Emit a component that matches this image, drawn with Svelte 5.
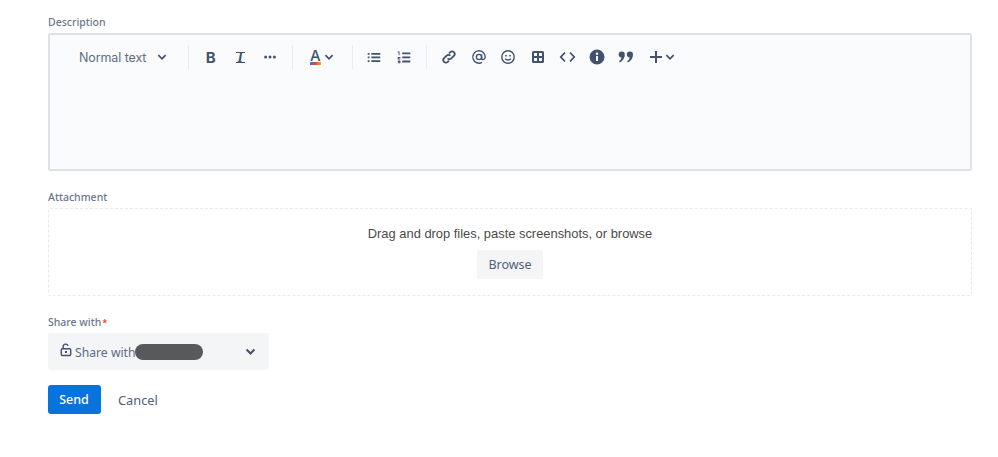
<script>
  const lists = [
    { id: 'bullet', d: 'M3 5.500h2v2H3zM3 9.500h2v2H3zM3 13.500h2v2H3zM7 5.500h10v2H7zM7 9.500h10v2H7zM7 13.500h10v2H7z' },
    { id: 'number', d: 'M3 4h2v4H4V5H3zM3 10h3v1H4.200v.6H6v1.200H3zM3 14h3v3H3v-1h2v-.3H3.600v-.6H5V15H3zM8 5h9v2H8zM8 9.500h9v2H8zM8 14h9v2H8z' }
  ];
</script>

<main class="page">
  <section class="field description">
    <div class="label">Description</div>
    <div class="editor">
      <div class="toolbar">
        <div class="style-select">
          <span>Normal text</span>
          <svg class="chev" viewBox="0 0 10 10"><path d="M2 3.500 5 6.500 8 3.500" /></svg>
        </div>
        <i class="sep first"></i>
        <div class="tool"><span class="bold">B</span></div>
        <div class="tool"><span class="italic">I</span></div>
        <div class="tool">
          <svg width="14" height="14" viewBox="0 0 14 14"><circle cx="2.600" cy="7" r="1.500" /><circle cx="7" cy="7" r="1.500" /><circle cx="11.400" cy="7" r="1.500" /></svg>
        </div>
        <i class="sep"></i>
        <div class="color">
          <span class="color-a">A<b></b></span>
          <svg class="chev" viewBox="0 0 10 10"><path d="M2 3.500 5 6.500 8 3.500" /></svg>
        </div>
        <i class="sep"></i>
        {#each lists as l}
          <div class="tool"><svg width="18" height="18" viewBox="0 0 20 20"><path d={l.d} /></svg></div>
        {/each}
        <i class="sep last"></i>
        <div class="tool">
          <svg width="16" height="16" viewBox="0 0 16 16" class="line"><path d="M6.600 9.400a2.600 2.600 0 0 0 3.700 0l2.600-2.600a2.600 2.600 0 0 0-3.700-3.700L8 4.300" /><path d="M9.400 6.600a2.600 2.600 0 0 0-3.700 0L3.100 9.200a2.600 2.600 0 0 0 3.700 3.700L8 11.700" /></svg>
        </div>
        <div class="tool">
          <svg width="16" height="16" viewBox="0 0 16 16" class="line thin"><circle cx="8" cy="8" r="2.600" /><path d="M10.600 5.400v3.800c0 2 3.600 2 3.600-1.200A6.200 6.200 0 1 0 11 13.400" /></svg>
        </div>
        <div class="tool">
          <svg width="16" height="16" viewBox="0 0 16 16" class="line thin"><circle cx="8" cy="8" r="6.200" /><path d="M5 9.600c1.600 1.800 4.400 1.800 6 0" /><path class="dots" d="M5.200 6h1.600v1.600H5.200zM9.200 6h1.600v1.600H9.200z" /></svg>
        </div>
        <div class="tool">
          <svg width="14" height="14" viewBox="0 0 14 14"><path fill-rule="evenodd" d="M2.500 1h9A1.500 1.500 0 0 1 13 2.500v9a1.500 1.500 0 0 1-1.500 1.500h-9A1.500 1.500 0 0 1 1 11.500v-9A1.500 1.500 0 0 1 2.500 1zM3 3v3h3V3zM8 3v3h3V3zM3 8v3h3V8zM8 8v3h3V8z" /></svg>
        </div>
        <div class="tool">
          <svg width="17" height="14" viewBox="0 0 17 14" class="line"><path d="M6 2.500 1.800 7 6 11.500M11 2.500 15.200 7 11 11.500" /></svg>
        </div>
        <div class="tool">
          <svg width="16" height="16" viewBox="0 0 16 16"><path fill-rule="evenodd" d="M8 .5a7.500 7.500 0 1 1 0 15 7.500 7.500 0 0 1 0-15zM7 7v5h2V7zM8 3.500a1.200 1.200 0 1 0 0 2.400 1.200 1.200 0 0 0 0-2.400z" /></svg>
        </div>
        <div class="tool">
          <svg width="16" height="14" viewBox="0 0 16 14"><path d="M3.800 1.500a3 3 0 0 1 3 3c0 3.500-2 6.500-5 8L1 11.200c1.300-.9 2.200-1.900 2.500-3.700A3 3 0 0 1 3.800 1.500zM12 1.500a3 3 0 0 1 3 3c0 3.500-2 6.500-5 8l-.8-1.300c1.300-.9 2.200-1.900 2.500-3.700A3 3 0 0 1 12 1.500z" /></svg>
        </div>
        <div class="tool plus">
          <svg width="14" height="14" viewBox="0 0 14 14"><path d="M6 1h2v5h5v2H8v5H6V8H1V6h5z" /></svg>
          <svg class="chev" viewBox="0 0 10 10"><path d="M2 3.500 5 6.500 8 3.500" /></svg>
        </div>
      </div>
    </div>
  </section>

  <section class="field attachment">
    <div class="label">Attachment</div>
    <div class="dropzone">
      <p>Drag and drop files, paste screenshots, or browse</p>
      <button class="browse">Browse</button>
    </div>
  </section>

  <section class="field share">
    <div class="label">Share with<span class="req">*</span></div>
    <div class="select">
      <svg class="lock" width="12" height="14" viewBox="0 0 12 14"><path d="M3.200 5.500V3.500a2.500 2.500 0 0 1 4.900-.6" /><rect x="1.300" y="5.700" width="9.400" height="6.800" rx="1" /><path class="hole" d="M5 8h2v2H5z" /></svg>
      <span class="share-text">Share with</span>
      <span class="redact"></span>
      <svg class="chev big" viewBox="0 0 10 10"><path d="M2 3.500 5 6.500 8 3.500" /></svg>
    </div>
  </section>

  <div class="actions">
    <button class="send">Send</button>
    <button class="cancel">Cancel</button>
  </div>
</main>

<style>
  :global(body) { margin: 0; background: #fff; }
  .page {
    box-sizing: border-box;
    width: 998px;
    height: 457px;
    padding: 16px 26px 0 48px;
    font-family: "Noto Sans", "Liberation Sans", sans-serif;
    color: #42526e;
    overflow: hidden;
  }
  .label {
    font: 500 10.500px/12px "Noto Sans", sans-serif;
    color: #6b778c;
  }
  .editor {
    box-sizing: border-box;
    height: 138px;
    margin-top: 5px;
    background: #fafbfd;
    border: 2px solid #dfe1e6;
    border-radius: 2px;
  }
  .toolbar {
    display: flex;
    align-items: center;
    height: 24px;
    margin-top: 10px;
    padding-left: 29px;
  }
  .style-select {
    display: flex;
    align-items: center;
    width: 109px;
    font-size: 12.500px;
    color: #5e6c84;
    font-family: "Inter", sans-serif;
    letter-spacing: -0.1px;
  }
  .style-select .chev { margin-left: 10px; }
  .chev { width: 12px; height: 12px; flex: none; fill: none; stroke: #42526e; stroke-width: 1.500; }
  .sep { display: block; width: 1px; height: 24px; background: #ebecf0; flex: none; margin: 0 7px; }
  .sep.first { margin-left: 0; }
  .sep.last { margin-right: 8px; }
  .tool {
    display: flex;
    align-items: center;
    justify-content: center;
    width: 29.500px;
    flex: none;
  }
  svg { fill: #42526e; }
  svg.line { fill: none; stroke: #42526e; stroke-width: 1.800; }
  svg.line.thin { stroke-width: 1.400; }
  svg.line .dots { fill: #42526e; stroke: none; }
  .bold { font: 700 15px "Inter", sans-serif; color: #42526e; }
  .italic { font: italic 600 14px "Liberation Serif", serif; color: #42526e; border-top: 1.500px solid #42526e; border-bottom: 1.500px solid #42526e; line-height: 9px; padding: 0 2px; }
  .color { display: flex; align-items: center; width: 45px; padding-left: 10.500px; box-sizing: border-box; }
  .color .chev { margin-left: 2px; }
  .color-a { position: relative; font: 500 15px/14px "Inter", sans-serif; color: #42526e; padding-bottom: 2px; }
  .color-a b {
    position: absolute;
    left: 0; right: 0; bottom: 0;
    height: 3px;
    background: linear-gradient(90deg, #2d7fd3, #e5493a 50%, #f5a623);
  }
  .plus { width: 44px; gap: 1px; justify-content: flex-start; padding-left: 8px; box-sizing: border-box; }
  .attachment { margin-top: 20px; }
  .dropzone {
    box-sizing: border-box;
    height: 88px;
    margin-top: 5px;
    border: 1px dashed #e8e9ec;
    border-radius: 2px;
    display: flex;
    flex-direction: column;
    align-items: center;
    padding-top: 17px;
  }
  .dropzone p {
    margin: 0;
    font: 12.900px/16px "Liberation Sans", sans-serif;
    color: #4a4a4a;
  }
  .browse {
    margin-top: 8px;
    height: 29px;
    width: 66px;
    border: 0;
    border-radius: 3px;
    background: #f4f5f7;
    color: #505f79;
    font: 400 12.500px "Noto Sans", sans-serif;
    padding: 0;
  }
  .share { margin-top: 20px; }
  .req { color: #de350b; margin-left: 1px; font-size: 9px; line-height: 0; }
  .select {
    display: flex;
    align-items: center;
    width: 221px;
    height: 37px;
    margin-top: 5px;
    padding: 0 12px;
    box-sizing: border-box;
    background: #f4f5f7;
    border-radius: 3px;
  }
  .lock { fill: none; stroke: #42526e; stroke-width: 1.400; flex: none; margin-bottom: 3px; }
  .lock .hole { fill: #42526e; stroke: none; }
  .share-text { margin-left: 3px; padding-top: 2px; font-size: 12.200px; color: #5e6c84; }
  .redact { width: 68px; height: 16px; margin-left: -1px; border-radius: 8px; background: #58595b; flex: none; }
  .chev.big { margin-left: auto; margin-right: 0; width: 13px; height: 13px; stroke-width: 1.600; }
  .actions { display: flex; align-items: center; margin-top: 15px; }
  .send {
    width: 53px;
    height: 29px;
    border: 0;
    border-radius: 3px;
    background: #0873dd;
    color: #fff;
    font: 500 12.500px "Noto Sans", sans-serif;
    padding: 0 1px 0 0;
  }
  .cancel {
    margin-left: 17px;
    border: 0;
    background: none;
    color: #505f79;
    font: 400 12.800px "Noto Sans", sans-serif;
    padding: 0;
  }
</style>
